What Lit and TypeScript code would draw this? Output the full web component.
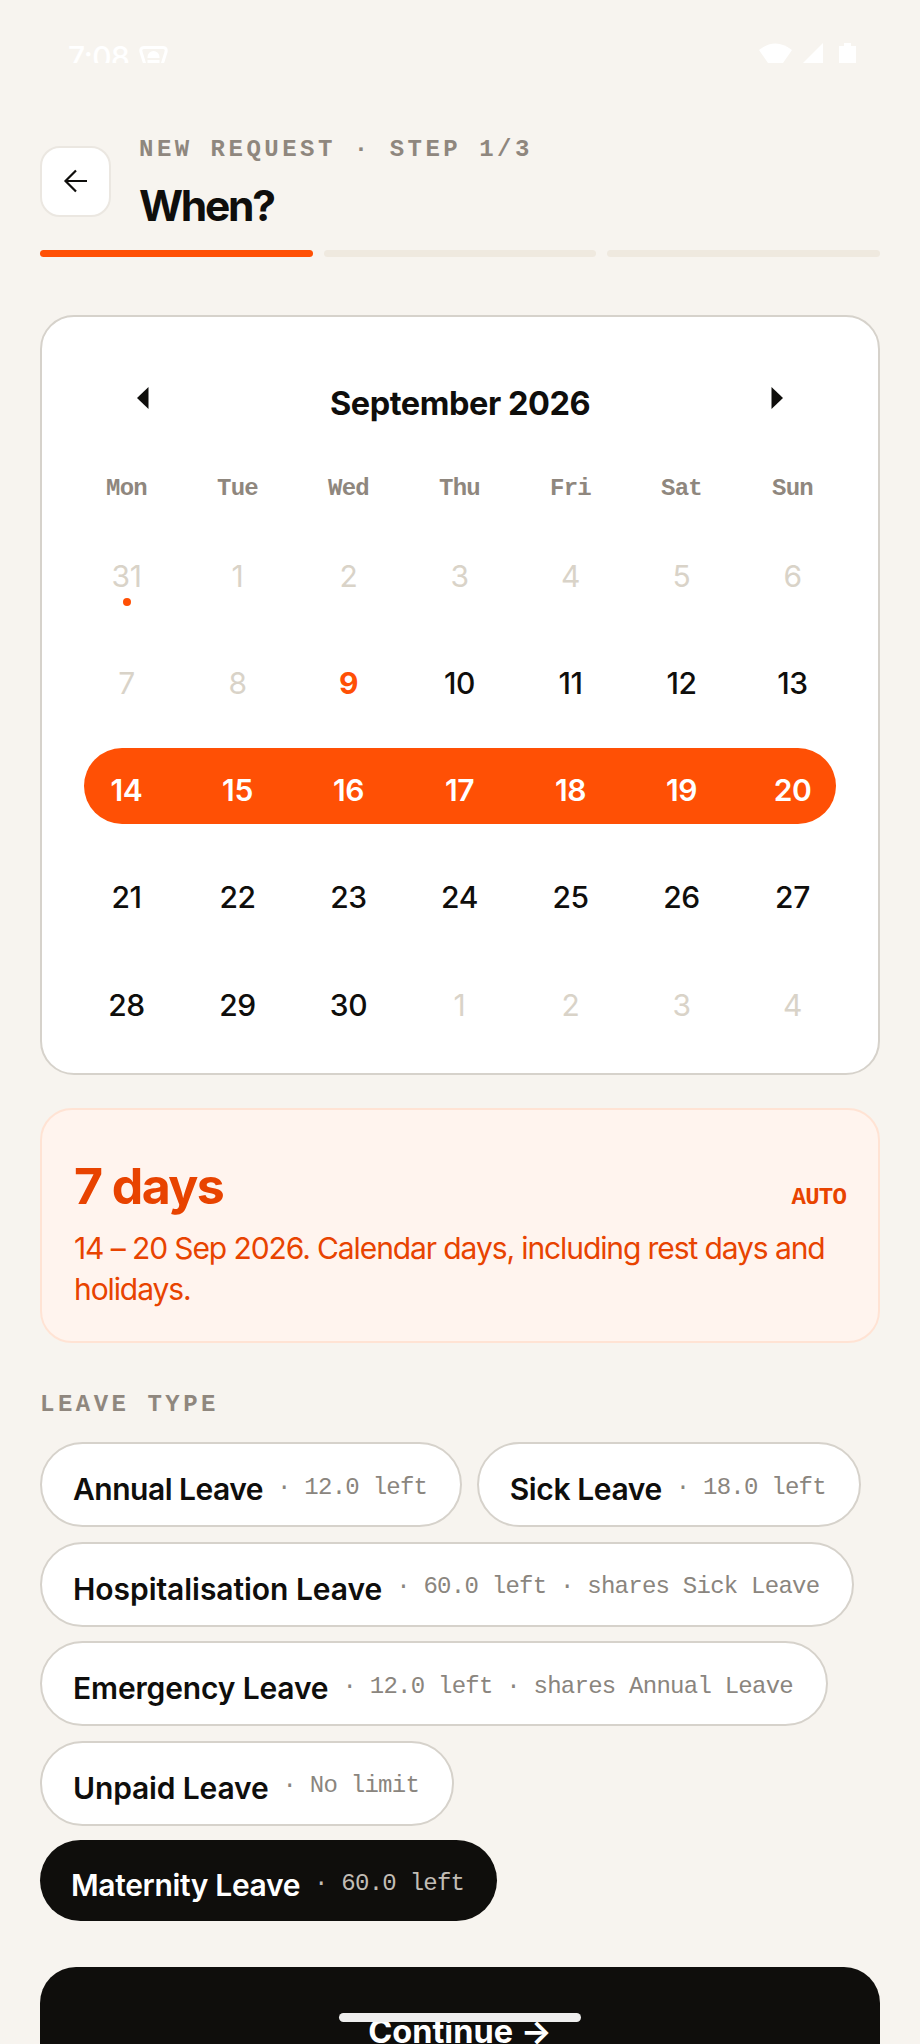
import { LitElement, html, css } from "lit";
import { customElement } from "lit/decorators.js";

const weeks: { n: number; s: string }[][] = [
  [[31,"o"],[1,"o"],[2,"o"],[3,"o"],[4,"o"],[5,"o"],[6,"o"]],
  [[7,"o"],[8,"o"],[9,"t"],[10,""],[11,""],[12,""],[13,""]],
  [[14,"r"],[15,"r"],[16,"r"],[17,"r"],[18,"r"],[19,"r"],[20,"r"]],
  [[21,""],[22,""],[23,""],[24,""],[25,""],[26,""],[27,""]],
  [[28,""],[29,""],[30,""],[1,"o"],[2,"o"],[3,"o"],[4,"o"]],
].map((w) => w.map(([n, s]) => ({ n: n as number, s: s as string })));

const chips = [
  { name: "Annual Leave", meta: "· 12.0 left", ls: -0.5 },
  { name: "Sick Leave", meta: "· 18.0 left", ls: -0.4 },
  { name: "Hospitalisation Leave", meta: "· 60.0 left · shares Sick Leave", ls: -0.05 },
  { name: "Emergency Leave", meta: "· 12.0 left · shares Annual Leave", ls: -0.15 },
  { name: "Unpaid Leave", meta: "· No limit", ls: -0.15 },
  { name: "Maternity Leave", meta: "· 60.0 left", ls: -0.35, sel: true },
];

@customElement("app-root")
export class AppRoot extends LitElement {
  static styles = css`
    :host {
      display: block;
      height: 2044px;
      overflow: hidden;
      background: #f7f4ef;
      font-family: Inter, sans-serif;
      color: #0f0e0c;
      position: relative;
    }
    .mono { font-family: "Liberation Mono", monospace; }
    .status {
      height: 63px;
      overflow: hidden;
      display: flex;
      justify-content: space-between;
      padding: 0 64px 0 68px;
      box-sizing: border-box;
      color: #fff;
    }
    .status-l { display: flex; gap: 11px; padding-top: 46px; align-items: flex-start; }
    .time { font-size: 30px; line-height: 22px; font-weight: 500; letter-spacing: -0.5px; width: 60px; }
    .status-r { display: flex; gap: 11px; padding-top: 43px; align-items: flex-start; }
    .status svg { display: block; }
    .batt { margin-left: 5px; }
    .head {
      display: flex;
      align-items: center;
      gap: 28px;
      padding: 68px 40px 0;
      height: 100px;
    }
    .back {
      width: 71px;
      height: 71px;
      box-sizing: border-box;
      border: 2px solid #ebe7e1;
      background: #fff;
      border-radius: 20px;
      display: flex;
      align-items: center;
      justify-content: center;
      flex: none;
    }
    .head-text { padding-top: 6.6px; }
    .eyebrow {
      font-size: 24px;
      font-weight: 700;
      letter-spacing: 3.5px;
      color: #8f877e;
      line-height: 30px;
    }
    .title {
      font-size: 42.5px;
      font-weight: 700;
      letter-spacing: -2.3px;
      line-height: 52px;
      margin-top: 15px;
      margin-bottom: 1.6px;
    }
    .bars {
      display: grid;
      grid-template-columns: repeat(3, 1fr);
      gap: 11px;
      padding: 0 40px;
      margin-top: 19px;
    }
    .bar { height: 7px; border-radius: 4px; background: #efe9df; }
    .bar.on { background: #ff5005; }
    .cal {
      margin: 58px 40px 0;
      background: #fff;
      border: 2px solid #d6d2cb;
      border-radius: 34px;
      padding: 42px 42px 35px;
      height: 760px;
      box-sizing: border-box;
    }
    .cal-head {
      display: flex;
      justify-content: space-between;
      align-items: center;
      height: 88px;
      margin-bottom: 26px;
      padding: 0 53px;
    }
    .cal-head svg { display: block; margin-bottom: 10px; }
    .month { font-size: 32.5px; font-weight: 700; letter-spacing: -0.45px; }
    .grid {
      display: grid;
      grid-template-columns: repeat(7, 85px);
      column-gap: 26px;
      margin-bottom: 31.3px;
      height: 76px;
      align-items: center;
      text-align: center;
    }
    .grid.wk {
      height: 30px;
      font-size: 24px;
      letter-spacing: -0.8px;
      font-weight: 700;
      color: #8f877e;
      margin-bottom: 30.5px;
    }
    .grid.range { background: #ff5005; border-radius: 38px; color: #fff; width: 752px; }
    .d {
      position: relative;
      font-size: 30px;
      font-weight: 500;
      letter-spacing: -0.4px;
      padding-top: 8px;
      line-height: 36px;
    }
    .d.o { color: #d9d3c8; font-weight: 400; }
    .d.t { color: #ff5005; font-weight: 700; }
    .d.r { font-weight: 600; }
    .dot {
      position: absolute;
      left: 50%;
      top: 48px;
      width: 8px;
      height: 8px;
      margin-left: -4px;
      border-radius: 50%;
      background: #ff5005;
    }
    .sum {
      margin: 33px 40px 0;
      height: 235px;
      box-sizing: border-box;
      background: #fff4ee;
      border: 2px solid #ffe3d4;
      border-radius: 32px;
      padding: 45px 32px 0;
      color: #e84300;
    }
    .sum-top { display: flex; justify-content: space-between; align-items: baseline; }
    .big { font-size: 50px; font-weight: 700; letter-spacing: -1.6px; line-height: 62px; }
    .auto { font-size: 24px; letter-spacing: -0.8px; font-weight: 700; }
    .sum-text { font-size: 30px; line-height: 41px; letter-spacing: -1.1px; margin-top: 11px; }
    .label {
      margin: 46.5px 40px 0;
      font-size: 24px;
      font-weight: 700;
      letter-spacing: 3.5px;
      color: #8f877e;
      line-height: 30px;
    }
    .chips {
      display: flex;
      flex-wrap: wrap;
      gap: 14.5px;
      padding: 22.5px 40px 0;
    }
    .chip {
      display: inline-flex;
      align-items: center;
      height: 85px;
      box-sizing: border-box;
      background: #fff;
      border: 2px solid #d6d2cb;
      border-radius: 43px;
      padding: 0 33px 0 31px;
      gap: 14px;
      white-space: nowrap;
    }
    .chip.sel { height: 81px; background: #0f0e0c; border: 0; color: #fff; }
    .name { font-size: 30px; font-weight: 600; padding-top: 9px; }
    .meta { font-size: 24px; letter-spacing: -0.75px; color: #8a857e; padding-top: 5px; }
    .chip.sel .meta { color: #c2bdb5; }
    .cta {
      margin: 46px 40px 0;
      height: 128px;
      border-radius: 36px;
      background: #0f0e0c;
      color: #fff;
      display: flex;
      align-items: center;
      justify-content: center;
      font-size: 32.5px;
      font-weight: 700;
    }
    .home {
      position: absolute;
      left: 339px;
      top: 2013px;
      width: 242px;
      height: 9px;
      border-radius: 5px;
      background: #eeeeee;
    }
  `;

  render() {
    return html`
      <div class="status">
        <div class="status-l">
          <span class="time">7:08</span>
          <svg width="29" height="24" viewBox="0 0 29 24" fill="none">
            <path d="M7 22 2 6Q1 1.500 5 1.500H24Q28 1.500 27 6L22 22" stroke="#fff" stroke-width="3"/>
            <path d="M8.500 11a6 6 0 0 1 12 0v8h-12z" fill="#fff"/>
            <rect x="8" y="12" width="13" height="2" fill="#f7f4ef"/>
          </svg>
        </div>
        <div class="status-r">
          <svg width="33" height="20" viewBox="0 0 33 20"><path d="M0 7Q16.500-6 33 7L24 20H9z" fill="#fff"/></svg>
          <svg width="20" height="20" viewBox="0 0 20 20"><path d="M20 0V20H0z" fill="#fff"/></svg>
          <svg class="batt" width="17" height="20" viewBox="0 0 17 20"><path d="M5 0h7v3h5v17H0V3h5z" fill="#fff"/></svg>
        </div>
      </div>
      <div class="head">
        <div class="back">
          <svg width="26" height="26" viewBox="0 0 26 26" fill="none" stroke="#0f0e0c" stroke-width="2.200">
            <path d="M24 13H3M13 2.500 2.500 13 13 23.500"/>
          </svg>
        </div>
        <div class="head-text">
          <div class="eyebrow mono">NEW REQUEST · STEP 1/3</div>
          <div class="title">When?</div>
        </div>
      </div>
      <div class="bars"><div class="bar on"></div><div class="bar"></div><div class="bar"></div></div>
      <div class="cal">
        <div class="cal-head">
          <svg width="12" height="22" viewBox="0 0 12 22"><path d="M11.500 0V22L0 11z" fill="#0f0e0c"/></svg>
          <span class="month">September 2026</span>
          <svg width="12" height="22" viewBox="0 0 12 22"><path d="M.5 0V22L12 11z" fill="#0f0e0c"/></svg>
        </div>
        <div class="grid wk mono">
          ${["Mon", "Tue", "Wed", "Thu", "Fri", "Sat", "Sun"].map((d) => html`<span>${d}</span>`)}
        </div>
        ${weeks.map(
          (w) => html`<div class="grid ${w[0].s === "r" ? "range" : ""}">
            ${w.map(
              (c) => html`<div class="d ${c.s}">${c.n}${c.n === 31 ? html`<span class="dot"></span>` : ""}</div>`
            )}
          </div>`
        )}
      </div>
      <div class="sum">
        <div class="sum-top">
          <span class="big">7 days</span>
          <span class="auto mono">AUTO</span>
        </div>
        <div class="sum-text">14 – 20 Sep 2026. Calendar days, including rest days and holidays.</div>
      </div>
      <div class="label mono">LEAVE TYPE</div>
      <div class="chips">
        ${chips.map(
          (c) => html`<div class="chip ${c.sel ? "sel" : ""}">
            <span class="name" style="letter-spacing:${c.ls}px">${c.name}</span><span class="meta mono">${c.meta}</span>
          </div>`
        )}
      </div>
      <div class="cta">Continue →</div>
      <div class="home"></div>
    `;
  }
}
